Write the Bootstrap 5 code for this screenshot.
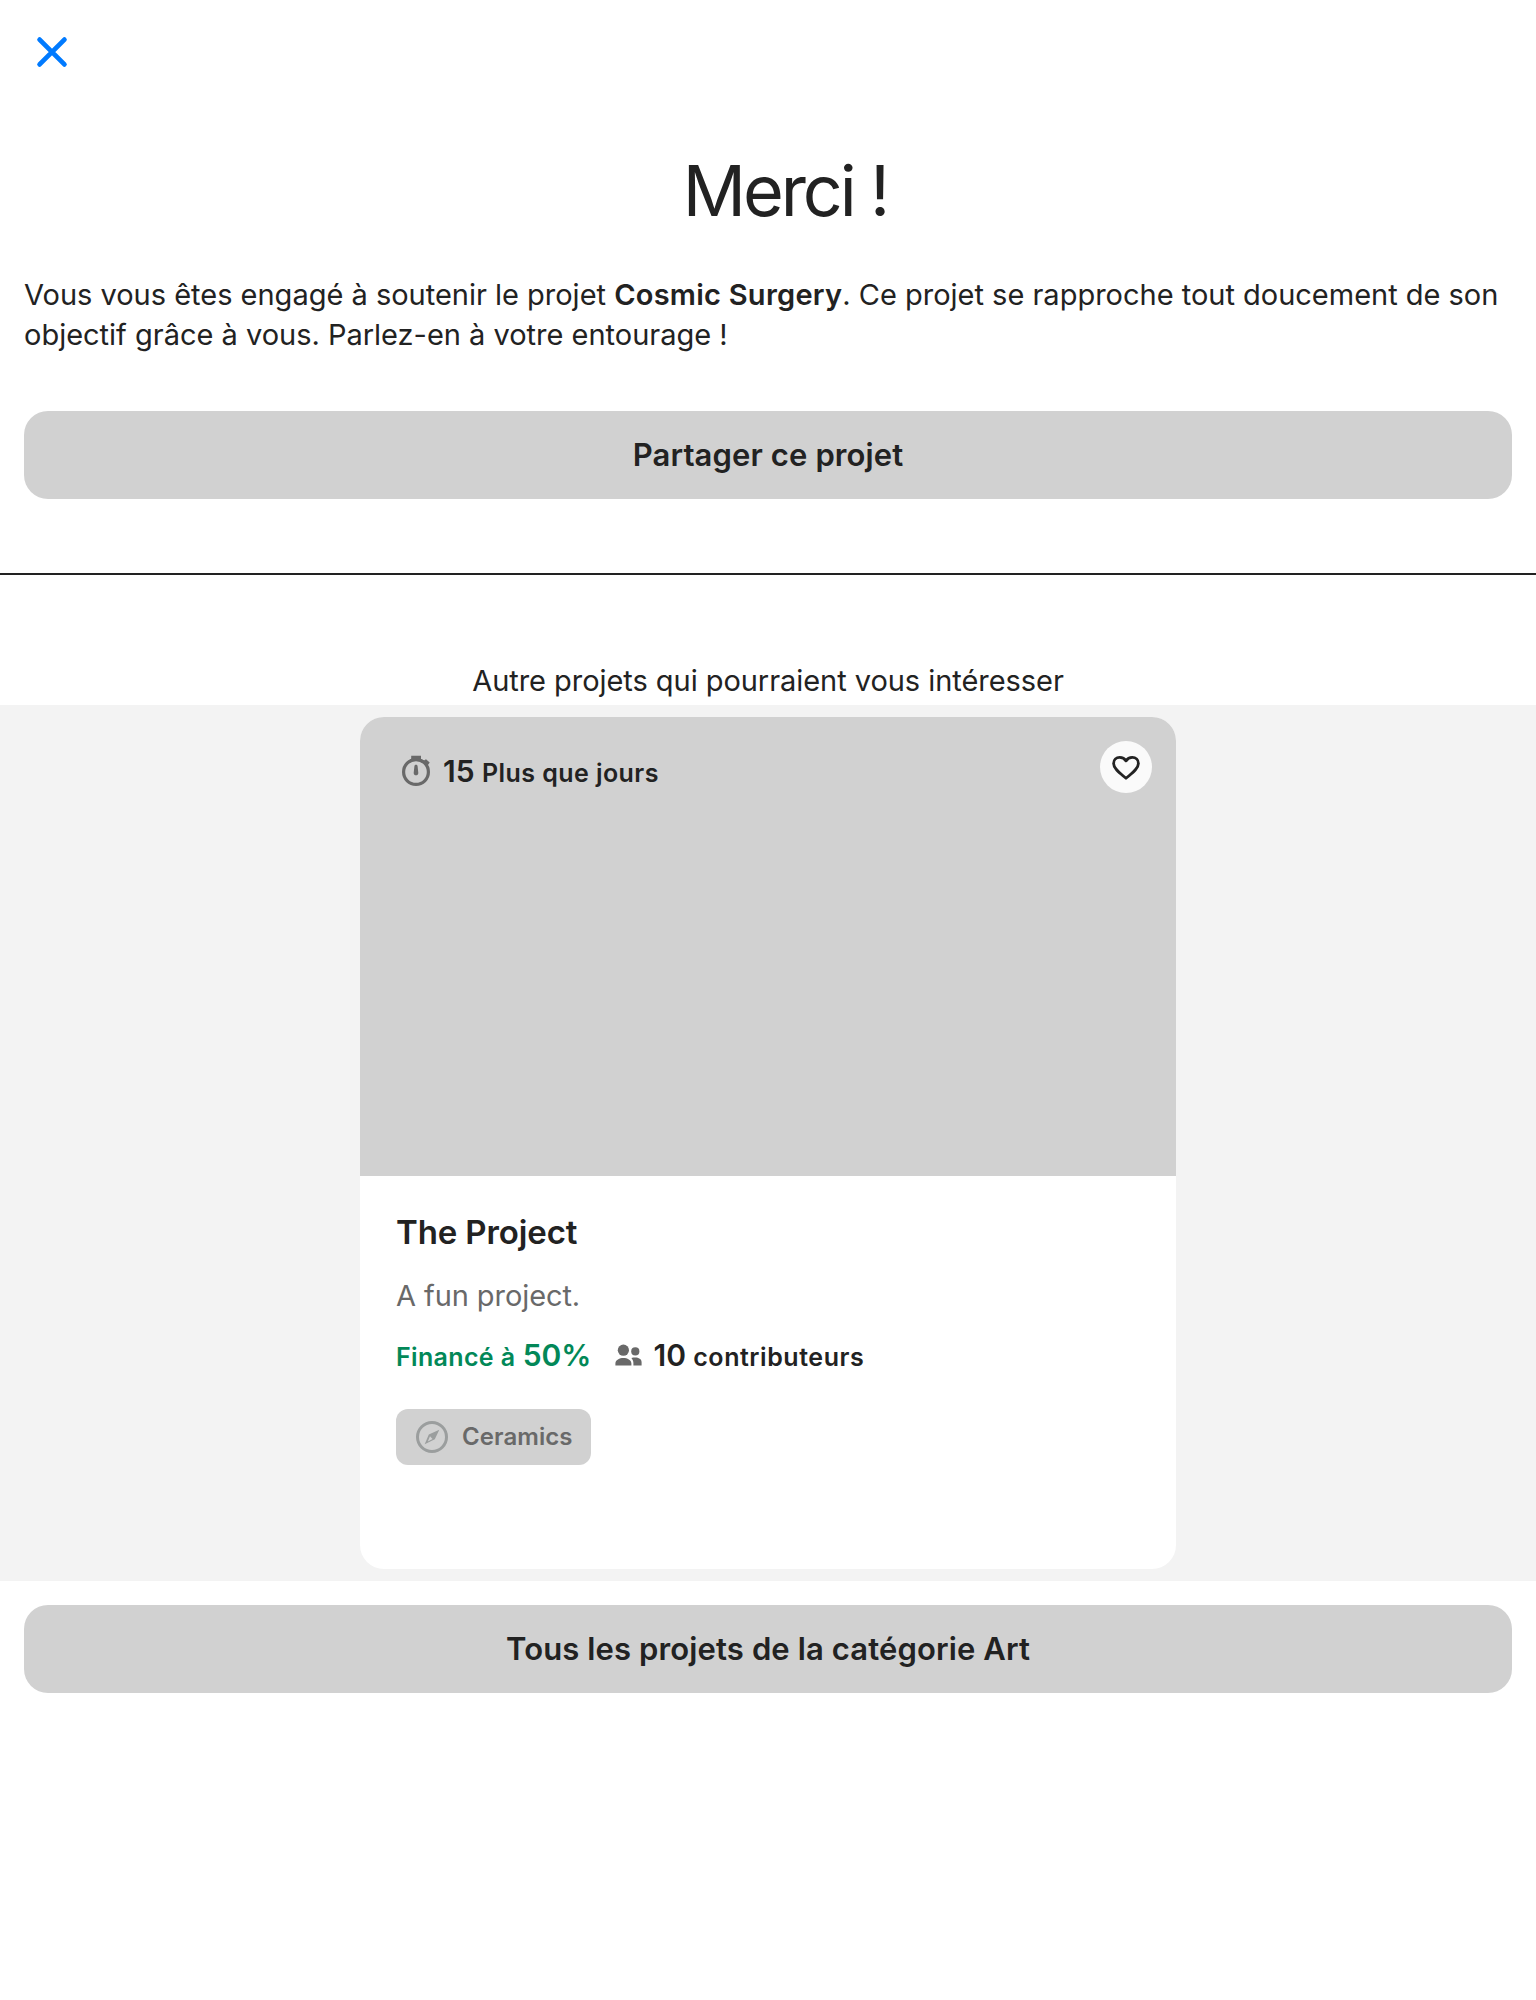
<!DOCTYPE html>
<html lang="fr">
<head>
<meta charset="utf-8">
<meta name="viewport" content="width=device-width, initial-scale=1">
<title>Merci !</title>
<link href="https://cdn.jsdelivr.net/npm/bootstrap@5.3.0/dist/css/bootstrap.min.css" rel="stylesheet">
<style>
body{font-family:Inter,"Liberation Sans",sans-serif;font-size:29px;line-height:36px;color:#222;background:#fff}
svg{display:block;flex:none}
.top-bar{height:104px;padding:0 36px}
.close-btn{width:32px;height:32px;color:#007aff}
.thanks-title{font-size:70px;line-height:84px;letter-spacing:-3.1px;margin:45px 0 42px;padding-left:34px;font-weight:400}
.thanks-text{line-height:40px;margin:0 0 56px;letter-spacing:-.01px}
.thanks-text strong{font-weight:600;letter-spacing:.25px}
.btn-kds{--bs-btn-bg:#d1d1d1;--bs-btn-color:#222;--bs-btn-hover-bg:#c6c6c6;--bs-btn-border-width:0;--bs-btn-border-radius:24px;--bs-btn-font-weight:600;--bs-btn-font-size:31px;--bs-btn-line-height:40px;height:88px;letter-spacing:.12px;padding:24px}
.rule{height:2px;background:#222;margin-top:74px}
.more-title{font-size:29px;line-height:36px;letter-spacing:-.05px;margin:88px 0 6px;font-weight:400}
.band{background:#f3f3f3;padding:12px 0}
.project{width:816px;height:852px;border-radius:24px;overflow:hidden}
.project-photo{height:459px;background:#d1d1d1;padding:24px 24px 0 42px}
.time-left{padding-top:12px}
.time-left svg{margin:0 13px 3px 0}
.num{font-size:30px}
.unit{font-size:25px;letter-spacing:.45px}
.heart{width:52px;height:52px;background:#fafafa}
.heart svg{margin-top:2px}
.project-body{padding:36px}
.project-name{font-size:33px;line-height:40px;font-weight:600;letter-spacing:-.12px;margin:0 0 26px}
.blurb{color:#696969;letter-spacing:-.08px;margin:0 0 23px}
.funded{color:#028858}
.funded .unit{letter-spacing:.35px}
.backers{margin-left:24px}
.backers svg{margin:7px 11px 0 0}
.backers .unit{letter-spacing:.55px}
.tag{height:56px;margin-top:34px;padding:0 18px 0 20px;background:#d1d1d1;border-radius:12px;color:#696969;font-size:24px;font-weight:600;letter-spacing:.07px}
.tag svg{margin-right:14px}
</style>
</head>
<body>
<header class="top-bar d-flex align-items-center">
  <button class="close-btn btn p-0 border-0" aria-label="Fermer">
    <svg width="32" height="32" viewBox="0 0 32 32" fill="none" stroke="currentColor" stroke-width="4.8" stroke-linecap="round"><path d="M3.600 3.600l24.800 24.800M28.400 3.600L3.600 28.400"/></svg>
  </button>
</header>
<main>
  <section class="px-4">
    <h1 class="thanks-title text-center">Merci !</h1>
    <p class="thanks-text">Vous vous êtes engagé à soutenir le projet <strong>Cosmic Surgery</strong>. Ce projet se rapproche tout doucement de son objectif grâce à vous. Parlez-en à votre entourage !</p>
    <button class="btn btn-kds w-100">Partager ce projet</button>
  </section>
  <div class="rule"></div>
  <h2 class="more-title text-center">Autre projets qui pourraient vous intéresser</h2>
  <section class="band">
    <article class="project bg-white mx-auto">
      <div class="project-photo d-flex justify-content-between align-items-start">
        <div class="time-left d-flex align-items-center fw-semibold">
          <svg width="28" height="32" viewBox="0 0 28 32"><circle cx="14" cy="17" r="12.4" fill="none" stroke="#696969" stroke-width="3.2"/><path d="M9.2.8h9.8v3.1l3 1.7 2-1.4 3.7 3.3-2.1 3-5-3.6-6.6-2.4L7 5.700l2.200-2zM14 9.800c1 0 1.500.5 1.600 1.500l.7 6.500c.1 1.500-1 2.500-2.300 2.500s-2.400-1-2.300-2.500l.7-6.500c.1-1 .6-1.500 1.600-1.500z" fill="#696969"/></svg>
          <span><span class="num">15</span> <span class="unit">Plus que jours</span></span>
        </div>
        <button class="heart btn rounded-circle border-0 p-0 d-flex align-items-center justify-content-center" aria-label="Suivre">
          <svg width="30" height="26" viewBox="0 0 30 26" fill="none" stroke="#222" stroke-width="2.8" stroke-linejoin="round"><path d="M15 23.300C9 18.100 2.600 13.700 2.600 8.400 2.600 4.800 5.300 2.400 8.700 2.400c2.500 0 4.900 1.200 6.300 3.500 1.400-2.300 3.800-3.500 6.300-3.500 3.400 0 6.100 2.400 6.100 6 0 5.300-6.400 9.700-12.400 14.900z"/></svg>
        </button>
      </div>
      <div class="project-body">
        <h3 class="project-name">The Project</h3>
        <p class="blurb">A fun project.</p>
        <div class="d-flex fw-semibold">
          <span class="funded"><span class="unit">Financé à</span> <span class="num">50%</span></span>
          <div class="backers d-flex align-items-center">
            <svg class="align-self-start" width="27" height="22" viewBox="0 0 27 22" fill="#696969"><circle cx="8.400" cy="6.200" r="5.600"/><circle cx="20.300" cy="7.400" r="4.100"/><path d="M.4 21.600v-2.200c0-3.600 4.200-5.500 8-5.500s8 1.900 8 5.500v2.200zM16.400 13.900c1.200-.3 2.600-.4 3.900-.4 3.300 0 6.300 1.500 6.300 4.700v3.400h-8.200v-2.400c0-2.200-.7-3.700-2-5.300z"/></svg>
            <span><span class="num">10</span> <span class="unit">contributeurs</span></span>
          </div>
        </div>
        <div class="tag d-inline-flex align-items-center">
          <svg width="32" height="32" viewBox="0 0 32 32" fill="#9b9e9e"><circle cx="16" cy="16" r="14.500" fill="none" stroke="#9b9e9e" stroke-width="3"/><path fill-rule="evenodd" d="M23.300 8.700L18.800 18.200 8.700 23.300 12.800 13.500zM14 15.300l-2.200 5.100 4.800-2.500z"/></svg>
          <span>Ceramics</span>
        </div>
      </div>
    </article>
  </section>
  <section class="p-4">
    <button class="btn btn-kds w-100">Tous les projets de la catégorie Art</button>
  </section>
</main>
<script src="https://cdn.jsdelivr.net/npm/bootstrap@5.3.0/dist/js/bootstrap.bundle.min.js"></script>
</body>
</html>
